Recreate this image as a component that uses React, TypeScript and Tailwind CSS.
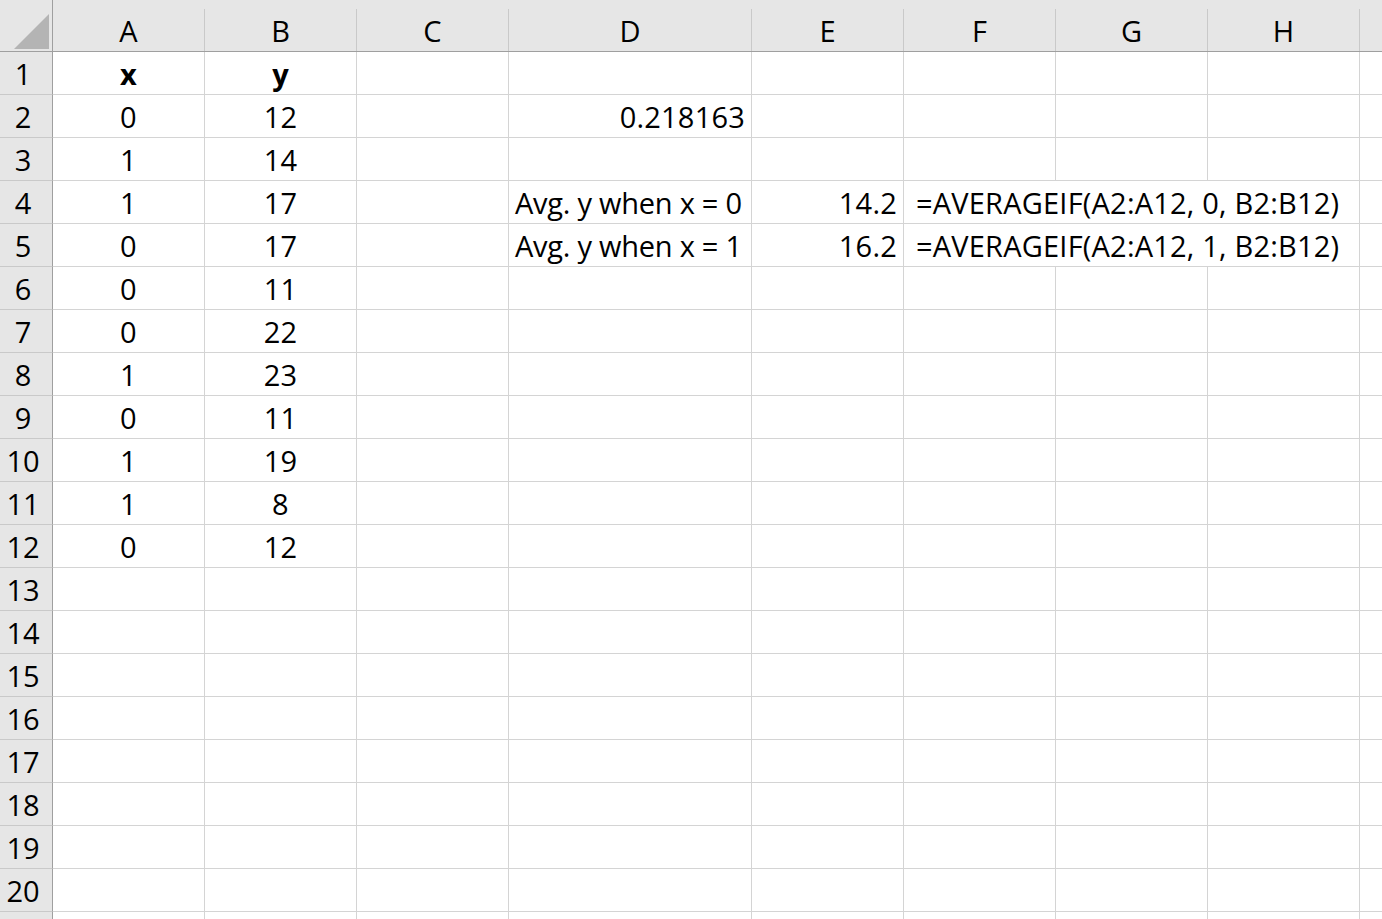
import React from "react";

const cols = ["A", "B", "C", "D", "E", "F", "G", "H", "I"];
const xs = ["x", "0", "1", "1", "0", "0", "0", "1", "0", "1", "1", "0"];
const ys = ["y", "12", "14", "17", "17", "11", "22", "23", "11", "19", "8", "12"];

const font = { fontFamily: '"Open Sans", "Liberation Sans", sans-serif' };

function Cell({
  children,
  align = "center",
  bold = false,
  span = 1,
  tight = false,
}: {
  children?: React.ReactNode;
  align?: "left" | "center" | "right";
  bold?: boolean;
  span?: number;
  tight?: boolean;
}) {
  const justify =
    align === "left" ? "justify-start pl-[6px]" : align === "right" ? "justify-end pr-[6px]" : "justify-center";
  return (
    <div
      className={`h-[43px] border-r border-b border-[#d4d4d4] bg-white flex items-center pt-[1px] whitespace-nowrap text-[29px] text-black ${justify} ${
        tight ? "tracking-[-0.25px]" : "tracking-[0.2px]"
      } ${bold ? "font-bold" : ""} ${span === 3 ? "col-span-3 !pl-[12px]" : ""}`}
    >
      {children}
    </div>
  );
}

export default function App() {
  const rows = Array.from({ length: 21 }, (_, i) => i + 1);

  const content = (r: number, c: string) => {
    if (c === "A" && r <= 12) return <Cell bold={r === 1}>{xs[r - 1]}</Cell>;
    if (c === "B" && r <= 12) return <Cell bold={r === 1}>{ys[r - 1]}</Cell>;
    if (c === "D" && r === 2) return <Cell align="right">0.218163</Cell>;
    if (c === "D" && r === 4)
      return (
        <Cell align="left" tight>
          Avg. y when x = 0
        </Cell>
      );
    if (c === "D" && r === 5)
      return (
        <Cell align="left" tight>
          Avg. y when x = 1
        </Cell>
      );
    if (c === "E" && r === 4) return <Cell align="right">14.2</Cell>;
    if (c === "E" && r === 5) return <Cell align="right">16.2</Cell>;
    if (c === "F" && r === 4)
      return (
        <Cell align="left" span={3}>
          =AVERAGEIF(A2:A12, 0, B2:B12)
        </Cell>
      );
    if (c === "F" && r === 5)
      return (
        <Cell align="left" span={3}>
          =AVERAGEIF(A2:A12, 1, B2:B12)
        </Cell>
      );
    if ((c === "G" || c === "H") && (r === 4 || r === 5)) return null;
    return <Cell />;
  };

  return (
    <div className="w-[1382px] h-[919px] overflow-hidden bg-white" style={font}>
      <div className="grid grid-cols-[53px_152px_152px_152px_243px_152px_152px_152px_152px_152px] w-max">
        {/* corner */}
        <div className="h-[52px] bg-[#e6e6e6] border-r border-b border-[#9f9f9f] relative">
          <svg className="absolute left-0 top-0" width="52" height="51" viewBox="0 0 52 51">
            <polygon points="49,14 49,49 14,49" fill="#b4b4b4" />
          </svg>
        </div>
        {cols.map((c) => (
          <div key={c} className="h-[52px] bg-[#e6e6e6] border-b border-[#9f9f9f] pt-[9px]">
            <div className="h-full border-r border-[#c9c9c9] flex items-center justify-center pt-[1px] text-[29px] text-black">
              {c === "I" ? "" : c}
            </div>
          </div>
        ))}

        {rows.map((r) => (
          <React.Fragment key={r}>
            <div className="h-[43px] bg-[#e6e6e6] border-r border-r-[#9f9f9f] border-b border-b-[#c9c9c9] flex items-center justify-center pr-[6px] pt-[1px] text-[29px] text-black">
              {r <= 20 ? r : ""}
            </div>
            {cols.map((c) => (
              <React.Fragment key={c}>{content(r, c)}</React.Fragment>
            ))}
          </React.Fragment>
        ))}
      </div>
    </div>
  );
}
